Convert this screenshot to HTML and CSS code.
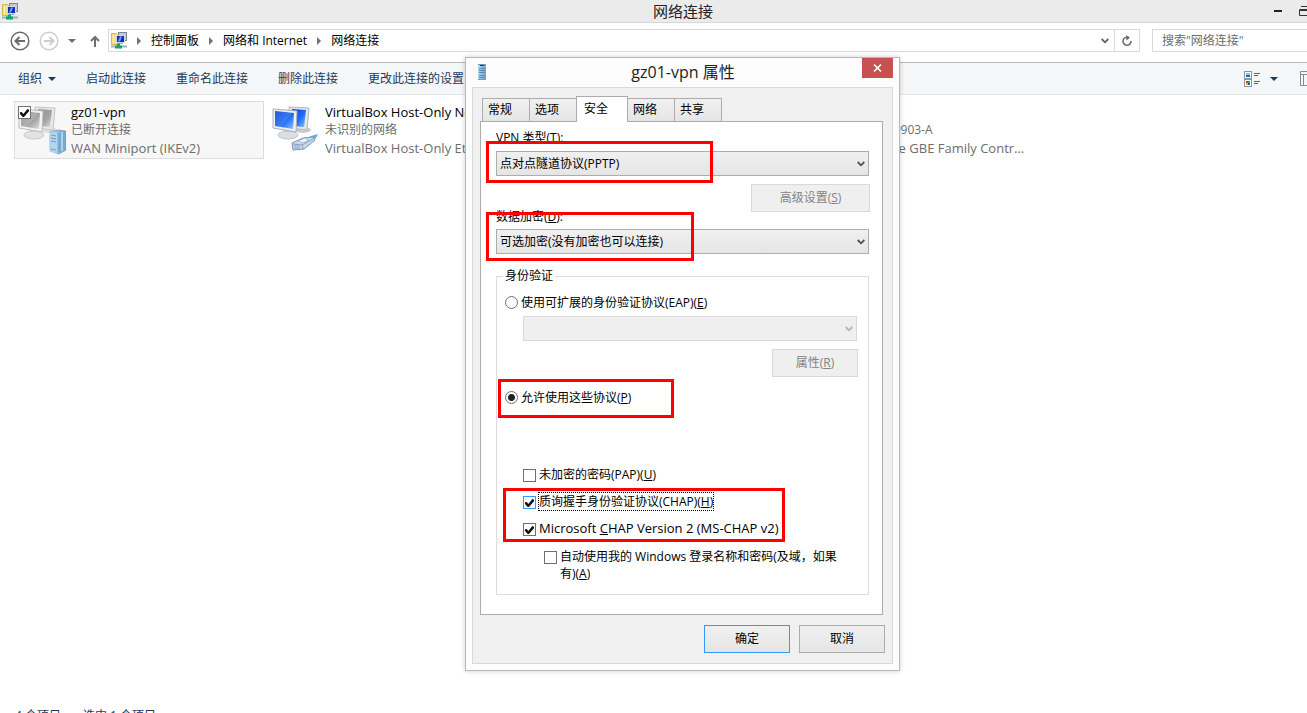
FILE: index.html
```
<!DOCTYPE html>
<html lang="zh-CN">
<head>
    <meta charset="UTF-8">
    <meta name="viewport" content="width=device-width, initial-scale=1.0">
    <title>网络连接</title>
    <link rel="stylesheet" href="styles.css">
</head>
<body>
    <!-- Shared icons -->
    <svg class="defs" width="0" height="0" aria-hidden="true">
        <defs>
            <linearGradient id="blue" x1="0" y1="0" x2="1" y2="1">
                <stop offset="0" stop-color="#0b3fd0"/><stop offset=".55" stop-color="#1e6cf5"/><stop offset="1" stop-color="#8cc4ff"/>
            </linearGradient>
            <linearGradient id="gray" x1="0" y1="0" x2="1" y2="1">
                <stop offset="0" stop-color="#8f8f8f"/><stop offset=".6" stop-color="#a4a4a4"/><stop offset="1" stop-color="#e2e2e2"/>
            </linearGradient>
            <linearGradient id="server" x1="0" y1="0" x2="1" y2="0">
                <stop offset="0" stop-color="#b9dcf3"/><stop offset="1" stop-color="#6ea5d2"/>
            </linearGradient>
            <symbol id="folder-net" viewBox="0 0 16 17">
                <path d="M0.5 1.5h5l1 1v10h-6z" fill="#f6dc86" stroke="#d8b550"/>
                <path d="M2.5 3v9" stroke="#fdf0b8"/>
                <rect x="7.5" y=".5" width="8" height="8" fill="#c3cad6" stroke="#7d8796"/>
                <rect x="5.5" y="3.5" width="8" height="7" fill="#1230c0" stroke="#d5d9e2"/>
                <path d="M9 4.500h2l-2 5H7z" fill="#7aa0f4"/>
                <path d="M7 11h5v1H7z" fill="#9aa2ae"/>
                <path d="M0 14.500h16" stroke="#9fb3ad" stroke-width="2"/>
                <path d="M6 11.500h3v2h2v3H4v-3h2z" fill="#13a56c"/>
            </symbol>
            <symbol id="chevron" viewBox="0 0 8 6">
                <path d="M.7 1L4 4.300 7.300 1" fill="none" stroke="currentColor" stroke-width="1.800"/>
            </symbol>
            <symbol id="sep" viewBox="0 0 4 8">
                <path d="M0 0l4 4-4 4z" fill="currentColor"/>
            </symbol>
            <symbol id="caret" viewBox="0 0 8 4">
                <path d="M0 0h8L4 4z" fill="currentColor"/>
            </symbol>
        </defs>
    </svg>

    <div class="window">
        <header class="titlebar">
            <svg class="app-icon" width="16" height="17"><use href="#folder-net"/></svg>
            <h1>网络连接</h1>
            <div class="window-buttons">
                <button type="button" aria-label="最小化"><svg width="8" height="3"><path d="M0 0h8v2H0z" fill="#222"/></svg></button>
                <button type="button" aria-label="还原"><svg width="12" height="11"><path d="M.5 3.500h8v6h-8zM.5 4.500h8" fill="none" stroke="#333"/><path d="M2 .5h9v6" fill="none" stroke="#333"/></svg></button>
            </div>
        </header>

        <nav class="navbar">
            <button type="button" class="round" aria-label="后退">
                <svg width="20" height="20" fill="none" stroke="#6b6b6b" stroke-width="1.500"><circle cx="10" cy="10" r="8.800"/><path d="M5.500 10h9.500M9.500 6l-4 4 4 4" stroke-width="2"/></svg>
            </button>
            <button type="button" class="round" aria-label="前进">
                <svg width="20" height="20" fill="none" stroke="#cdcdcd" stroke-width="1.500"><circle cx="10" cy="10" r="8.800"/><path d="M5 10h9.500M10.500 6l4 4-4 4" stroke-width="2"/></svg>
            </button>
            <button type="button" class="history" aria-label="最近浏览的位置"><svg width="8" height="4"><use href="#caret"/></svg></button>
            <button type="button" class="up" aria-label="上移">
                <svg width="10" height="12" fill="none" stroke="#707070" stroke-width="2"><path d="M5 12V2M1 6l4-4 4 4"/></svg>
            </button>
            <div class="address">
                <svg width="16" height="17"><use href="#folder-net"/></svg>
                <svg class="sep" width="4" height="8"><use href="#sep"/></svg>
                <a href="#">控制面板</a>
                <svg class="sep" width="4" height="8"><use href="#sep"/></svg>
                <a href="#">网络和 Internet</a>
                <svg class="sep" width="4" height="8"><use href="#sep"/></svg>
                <a href="#">网络连接</a>
                <button type="button" class="drop" aria-label="以前的位置"><svg width="8" height="6"><use href="#chevron"/></svg></button>
                <button type="button" class="refresh" aria-label="刷新">
                    <svg width="12" height="12" fill="none" stroke="#6d6d6d" stroke-width="1.600"><path d="M7.500 2.500A4 4 0 1 0 10 6"/><path d="M5 0l4 2.700L5.500 5.500z" fill="#6d6d6d" stroke="none"/></svg>
                </button>
            </div>
            <input class="search" type="text" aria-label="搜索" placeholder='搜索"网络连接"'>
        </nav>

        <div class="toolbar">
            <button type="button">组织 <svg width="8" height="4"><use href="#caret"/></svg></button>
            <button type="button">启动此连接</button>
            <button type="button">重命名此连接</button>
            <button type="button">删除此连接</button>
            <button type="button">更改此连接的设置</button>
            <div class="view-buttons">
                <button type="button" aria-label="更改视图">
                    <svg width="16" height="16">
                        <rect x=".5" y=".5" width="7" height="7" fill="#fff" stroke="#8797ab"/><rect x="2" y="2" width="4" height="2" fill="#8cc8ec"/><rect x="2" y="4" width="4" height="2" fill="#236f7c"/>
                        <rect x=".5" y="8.500" width="7" height="7" fill="#fff" stroke="#8797ab"/><rect x="2" y="10" width="2" height="2" fill="#d23b2c"/><rect x="4" y="10" width="2" height="2" fill="#3c9f37"/><rect x="2" y="12" width="2" height="2" fill="#e3c228"/><rect x="4" y="12" width="2" height="2" fill="#2c50c8"/>
                        <path d="M10 2.500h6M10 4.500h4M10 10.500h6M10 12.500h4" stroke="#4b6487"/>
                    </svg>
                </button>
                <button type="button" aria-label="更多选项"><svg width="8" height="4"><use href="#caret"/></svg></button>
                <button type="button" aria-label="显示预览窗格">
                    <svg width="16" height="15" fill="none" stroke="#8a8a8a"><path d="M.5.500h15v14H.5zM0 3.500h16M3.500 3v12"/></svg>
                </button>
            </div>
        </div>

        <main class="connections">
            <div class="connection selected">
                <svg class="net-icon" width="48" height="50">
                    <ellipse cx="31" cy="25" rx="8" ry="3" fill="#ddd"/>
                    <path d="M17 2l20 1-2 22-16-2z" fill="#e9e9e9" stroke="#c4c4c4"/><path d="M20 4l14 1-2 17-12-1z" fill="url(#gray)"/>
                    <path d="M12 24l10 2-1 4h-8z" fill="#c9c9c9"/><ellipse cx="16" cy="30" rx="10" ry="4" fill="#e2e2e2" stroke="#cacaca"/>
                    <path d="M1 4l24 2-1 21L1 23z" fill="#f2f2f2" stroke="#bdbdbd"/><path d="M3 6l19 2-1 16L3 21z" fill="url(#gray)"/><path d="M3 6l17 2L9 22l-6-1z" fill="#fff" opacity=".15"/>
                    <path d="M32 27l8-2 8 1v19l-7 4-9-3z" fill="url(#server)" stroke="#5e90b8" stroke-width=".6"/><path d="M32 27l7 1v21l-7-3z" fill="#b4d5ec"/><path d="M33 30l5 1M33 33l5 1M33 36l5 1M33 44l5 1" stroke="#6d9dc5"/><path d="M40 28l7-2v19l-7 3z" fill="#77a9d1"/><path d="M44 27v19" stroke="#a9d2ed" stroke-width="2"/>
                </svg>
                <input type="checkbox" class="tick pick" aria-label="选择 gz01-vpn" checked>
                <div class="info">
                    <div class="latin name">gz01-vpn</div>
                    <div>已断开连接</div>
                    <div class="latin">WAN Miniport (IKEv2)</div>
                </div>
            </div>
            <div class="connection">
                <svg class="net-icon" width="48" height="50">
                    <ellipse cx="31" cy="25" rx="8" ry="3" fill="#ccc"/>
                    <path d="M17 2l20 1-2 22-16-2z" fill="#e3e6ea" stroke="#b2b7bd"/><path d="M20 4l14 1-2 17-12-1z" fill="url(#blue)"/>
                    <path d="M12 24l10 2-1 4h-8z" fill="#b8bcc1"/><ellipse cx="16" cy="30" rx="10" ry="4" fill="#dcdfe2" stroke="#c0c4c8"/>
                    <path d="M1 4l24 2-1 21L1 23z" fill="#eef0f2" stroke="#aab0b7"/><path d="M3 6l19 2-1 16L3 21z" fill="url(#blue)"/><path d="M3 6l17 2L9 22l-6-1z" fill="#fff" opacity=".12"/>
                    <path d="M34 34l5-3 7-2-2 4-6 4z" fill="#4fb4dc"/>
                    <path d="M20 38l11-5 10-1 2 3-11 9-11 1z" fill="#c9daea" stroke="#7a97b5"/><path d="M21 39l9 1 11-6M30 40l1 4M23 40v4M25 40v4M27 40v4" stroke="#8aa4be" fill="none"/><path d="M26 36l7-3 4 2-6 3z" fill="#e8f1f8" stroke="#8aa4be" stroke-width=".6"/>
                </svg>
                <div class="info">
                    <div class="latin name">VirtualBox Host-Only Network</div>
                    <div>未识别的网络</div>
                    <div class="latin">VirtualBox Host-Only Ethernet Adapter</div>
                </div>
            </div>
            <div class="connection wired">
                <div class="info">
                    <div class="name">以太网</div>
                    <div>TP-LINK_150903-A</div>
                    <div class="latin">Realtek PCIe GBE Family Controller</div>
                </div>
            </div>
        </main>

        <footer class="statusbar"><span>4 个项目</span><span>选中 1 个项目</span></footer>
    </div>

    <section class="dialog" role="dialog" aria-labelledby="dialog-title">
        <header class="dialog-title">
            <svg width="8" height="16"><rect width="8" height="16" fill="url(#server)"/><path d="M0 .5h8M0 15.500h8" stroke="#6f9cc0"/><path d="M2 1.500h4" stroke="#235"/><path d="M1 4.500h6M1 6.500h6M1 8.500h6M1 11.500h6M1 13.500h6" stroke="#5588b5"/></svg>
            <h2 id="dialog-title">gz01-vpn 属性</h2>
            <button type="button" class="close" aria-label="关闭"><svg width="9" height="8"><path d="M1 .5l7 7M8 .5l-7 7" stroke="#fff" stroke-width="1.600"/></svg></button>
        </header>
        <div class="dialog-body">
            <div class="tabs" role="tablist">
                <button type="button" role="tab">常规</button>
                <button type="button" role="tab">选项</button>
                <button type="button" role="tab" class="active" aria-selected="true">安全</button>
                <button type="button" role="tab">网络</button>
                <button type="button" role="tab">共享</button>
            </div>
            <form class="panel">
                <label class="field-label" for="vpn-type">VPN 类型(<u>T</u>):</label>
                <div class="combo">
                    <select id="vpn-type"><option>点对点隧道协议(PPTP)</option></select>
                    <svg width="8" height="6"><use href="#chevron"/></svg>
                </div>
                <button type="button" class="btn advanced" disabled>高级设置(<u>S</u>)</button>
                <label class="field-label" for="encryption">数据加密(<u>D</u>):</label>
                <div class="combo">
                    <select id="encryption"><option>可选加密(没有加密也可以连接)</option></select>
                    <svg width="8" height="6"><use href="#chevron"/></svg>
                </div>

                <fieldset>
                    <legend>身份验证</legend>
                    <label class="option"><input type="radio" name="auth"><span>使用可扩展的身份验证协议(EAP)(<u>E</u>)</span></label>
                    <div class="combo eap">
                        <select aria-label="EAP 类型" disabled><option></option></select>
                        <svg width="8" height="6"><use href="#chevron"/></svg>
                    </div>
                    <button type="button" class="btn props" disabled>属性(<u>R</u>)</button>
                    <label class="option protocols"><input type="radio" name="auth" checked><span>允许使用这些协议(<u>P</u>)</span></label>
                    <div class="checks">
                        <label class="option"><input type="checkbox" class="tick"><span>未加密的密码(PAP)(<u>U</u>)</span></label>
                        <label class="option focused"><input type="checkbox" class="tick" checked><span>质询握手身份验证协议(CHAP)(<u>H</u>)</span></label>
                        <label class="option"><input type="checkbox" class="tick" checked><span class="latin">Microsoft <u>C</u>HAP Version 2 (MS-CHAP v2)</span></label>
                        <label class="option nested"><input type="checkbox" class="tick"><span>自动使用我的 Windows 登录名称和密码(及域，如果有)(<u>A</u>)</span></label>
                    </div>
                </fieldset>
            </form>
            <div class="actions">
                <button type="button" class="btn default">确定</button>
                <button type="button" class="btn">取消</button>
            </div>
        </div>

        <!-- Highlights -->
        <div class="mark mark-type"></div>
        <div class="mark mark-encryption"></div>
        <div class="mark mark-protocols"></div>
        <div class="mark mark-chap"></div>
    </section>
</body>
</html>
```
FILE: styles.css
```
* {
    box-sizing: border-box;
}

body {
    margin: 0;
    height: 100vh;
    overflow: hidden;
    position: relative;
    background: #fff;
    color: #000;
    font-family: "Open Sans", "Noto Sans CJK SC", sans-serif;
    font-size: 12px;
    line-height: 18px;
}

button, input, select {
    font: inherit;
    color: inherit;
    margin: 0;
}

button {
    display: flex;
    align-items: center;
    justify-content: center;
    padding: 0;
    border: 0;
    background: none;
    white-space: nowrap;
}

svg {
    display: block;
    flex: none;
}

h1, h2 {
    margin: 0;
    flex: 1;
    font-size: 15px;
    font-weight: normal;
    text-align: center;
    color: #222;
}

u {
    text-underline-offset: 1px;
}

.defs {
    position: absolute;
}

.latin {
    font-size: 13px;
}

/* Explorer window */
.window {
    display: flex;
    flex-direction: column;
    height: calc(100vh + 16px);
}

.titlebar {
    display: flex;
    align-items: center;
    height: 23px;
    padding-left: 2px;
    background: #ebebeb;
    border-bottom: 1px solid #d7d7d7;
}

.titlebar h1 {
    padding-left: 74px;
}

.window-buttons {
    display: flex;
    gap: 17px;
    margin-right: -4px;
}

.navbar {
    display: flex;
    align-items: center;
    height: 39px;
    padding: 0 0 4px 10px;
}

.round {
    margin-right: 9px;
}

.history {
    margin: 0 14px 0 0;
    color: #707070;
}

.up {
    margin-right: 8px;
}

.address {
    display: flex;
    align-items: center;
    flex: 1;
    height: 23px;
    padding-left: 2px;
    border: 1px solid #d9d9d9;
}

.address a {
    color: #000;
    text-decoration: none;
    white-space: nowrap;
}

.sep {
    margin: 0 10px;
    color: #707070;
}

.drop {
    margin-left: auto;
    padding: 0 5px;
    color: #606060;
}

.refresh {
    width: 25px;
    height: 21px;
    border-left: 1px solid #d9d9d9;
}

.search {
    width: 156px;
    height: 23px;
    margin: 0 -1px 0 12px;
    padding: 0 9px;
    border: 1px solid #d9d9d9;
    border-radius: 0;
    outline: 0;
}

.search::placeholder {
    color: #6d6d6d;
    opacity: 1;
}

.toolbar {
    display: flex;
    gap: 30px;
    height: 33px;
    padding-left: 18px;
    background: #f4f6f8;
    border-top: 1px solid #b9b9b9;
    border-bottom: 1px solid #e4e6e8;
    color: #1e395b;
}

.toolbar button {
    gap: 6px;
}

.view-buttons {
    display: flex;
    gap: 10px;
    margin: 0 -9px 0 auto;
}

.view-buttons button:last-child {
    margin-left: 12px;
}

.connections {
    display: grid;
    grid-template-columns: repeat(auto-fill, 250px);
    align-content: start;
    gap: 4px;
    flex: 1;
    padding: 6px 14px;
}

.connection {
    display: flex;
    position: relative;
    height: 58px;
    padding: 1px 6px 0 3px;
    border: 1px solid transparent;
    color: #6d6d6d;
}

.connection.selected {
    background: #f7f7f7;
    border-color: #dcdcdc;
}

.wired {
    grid-column: 4;
    padding-left: 54px;
    padding-right: 0;
}

.net-icon {
    margin: 2px 5px 0 0;
}

.info {
    min-width: 0;
}

.info div {
    overflow: hidden;
    white-space: nowrap;
    text-overflow: ellipsis;
}

.info .name {
    color: #000;
}

.pick {
    position: absolute;
    top: 4px;
    left: 3px;
}

.statusbar {
    display: flex;
    gap: 22px;
    height: 22px;
    padding-left: 15px;
    color: #1e395b;
}

/* Ticks and radios */
.tick {
    appearance: none;
    flex: none;
    width: 13px;
    height: 13px;
    border: 1px solid #707070;
    background: #fff;
}

.tick:checked::after {
    content: "";
    display: block;
    width: 9px;
    height: 8px;
    margin: 2px 1px;
    background: #111;
    clip-path: polygon(0 42%, 18% 38%, 38% 62%, 82% 0, 100% 10%, 100% 28%, 44% 100%, 30% 100%, 0 62%);
}

input[type="radio"] {
    appearance: none;
    flex: none;
    width: 13px;
    height: 13px;
    border: 1px solid #707070;
    border-radius: 50%;
    background: #fff;
}

input[type="radio"]:checked {
    background: radial-gradient(circle, #222 3px, #fff 4px);
}

/* Properties dialog */
.dialog {
    position: absolute;
    top: 57px;
    left: 465px;
    width: 435px;
    padding: 0 6px 6px;
    border: 1px solid #b9b9b9;
    background: #fcfcfc;
    box-shadow: 0 0 5px rgba(0, 0, 0, 0.2);
}

.dialog-title {
    display: flex;
    align-items: center;
    height: 29px;
    padding: 0 0 1px 6px;
}

.dialog-title h2 {
    padding-left: 18px;
    font-size: 16px;
}

.close {
    align-self: flex-start;
    width: 31px;
    height: 20px;
    background: #c75050;
}

.dialog-body {
    padding: 8px 7px 10px;
    border: 1px solid #d9d9d9;
    background: #f0f0f0;
}

.tabs {
    display: flex;
    align-items: flex-end;
    height: 25px;
    padding-left: 2px;
}

.tabs button {
    justify-content: flex-start;
    width: 48px;
    height: 23px;
    margin-right: -1px;
    padding-left: 5px;
    border: 1px solid #acacac;
    border-bottom: 0;
    background: linear-gradient(#f0f0f0, #e5e5e5);
}

.tabs .active {
    position: relative;
    width: 52px;
    height: 26px;
    margin-bottom: -1px;
    padding: 0 0 2px 7px;
    background: #fff;
}

.panel {
    display: flex;
    flex-direction: column;
    height: 494px;
    margin-right: 2px;
    padding: 7px 13px 19px 15px;
    border: 1px solid #acacac;
    background: #fff;
}

.field-label {
    height: 22px;
}

.combo {
    display: flex;
    align-items: center;
    color: #505050;
}

.combo select {
    appearance: none;
    flex: 1;
    height: 25px;
    padding: 0 3px;
    border: 1px solid #acacac;
    border-radius: 0;
    background: linear-gradient(#f0f0f0, #e5e5e5);
    color: #000;
}

.combo select:disabled {
    border-color: #d9d9d9;
    background: #efefef;
    opacity: 1;
}

.combo svg {
    margin: 0 4px 0 -12px;
    pointer-events: none;
}

.btn {
    width: 86px;
    height: 28px;
    border: 1px solid #acacac;
    background: linear-gradient(#f0f0f0, #e5e5e5);
}

.btn:disabled {
    border-color: #d9d9d9;
    background: #efefef;
    color: #838383;
}

.btn.default {
    border-color: #3399ff;
}

.advanced {
    align-self: flex-end;
    width: 119px;
    margin: 8px -1px -4px 0;
}

.advanced + .field-label {
    height: 21px;
}

fieldset {
    flex: 1;
    margin: 13px 0 0;
    padding: 9px 11px 0 8px;
    border: 1px solid #dcdcdc;
}

legend {
    margin-left: -2px;
    padding: 0 2px;
}

.option {
    display: flex;
    align-items: flex-start;
    gap: 3px;
}

.option input {
    margin-top: 2px;
}

.eap {
    margin: 4px 0 8px 18px;
    color: #b4b4b4;
}

.props {
    margin: 0 -1px 0 auto;
}

.protocols {
    margin-top: 12px;
}

.checks {
    display: flex;
    flex-direction: column;
    align-items: flex-start;
    gap: 10px;
    margin: 59px 0 0 18px;
}

.checks .tick {
    margin-top: 3px;
}

.checks .option {
    line-height: 17px;
}

.focused span {
    outline: 1px dotted #000;
}

.focused .tick {
    border-color: #3399ff;
    background: #f3f9ff;
}

.checks .nested {
    max-width: 302px;
    margin: 1px 0 0 21px;
}

.actions {
    display: flex;
    justify-content: flex-end;
    gap: 9px;
    margin-top: 10px;
}

/* Red highlight boxes lie over the dialog */
.mark {
    position: absolute;
    border: 3px solid #f00;
    pointer-events: none;
}

.mark-type {
    top: 83px;
    left: 20px;
    width: 227px;
    height: 42px;
}

.mark-encryption {
    top: 154px;
    left: 20px;
    width: 208px;
    height: 49px;
}

.mark-protocols {
    top: 321px;
    left: 32px;
    width: 176px;
    height: 39px;
}

.mark-chap {
    top: 430px;
    left: 37px;
    width: 282px;
    height: 54px;
}
```
